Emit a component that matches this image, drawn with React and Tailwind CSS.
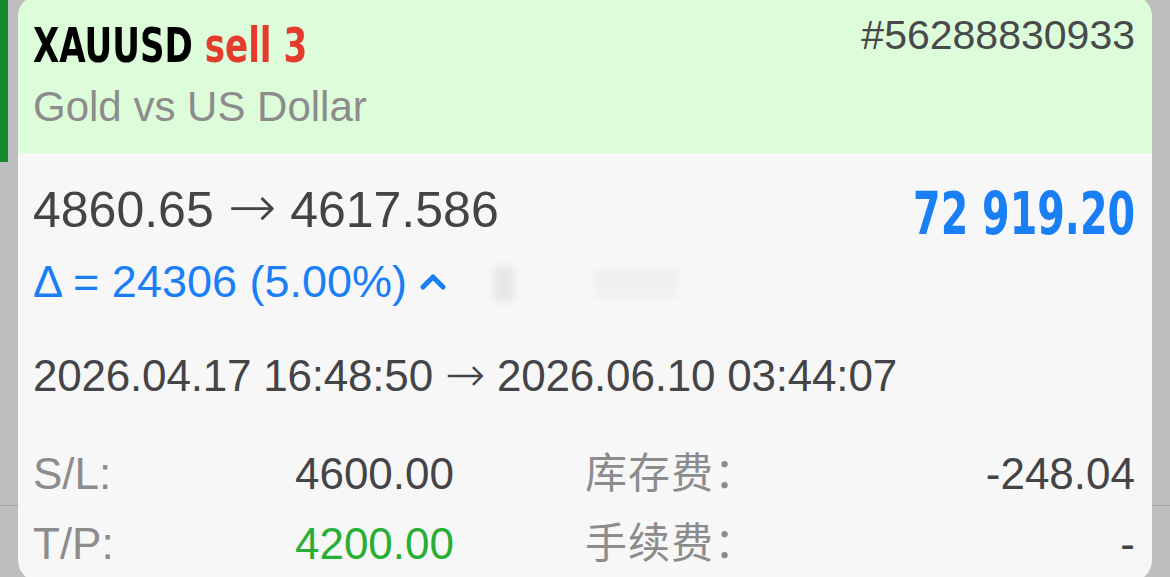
import React from 'react';

const sans = { fontFamily: '"Liberation Sans", Arial, "Noto Sans CJK SC", sans-serif' };
const narrow = { fontFamily: '"DejaVu Sans Condensed", "Liberation Sans", sans-serif' };
const arrowFont = { fontFamily: '"DejaVu Sans", sans-serif' };

const Arrow = ({ className = '' }) => (
    <span className={`font-extralight leading-[0] ${className}`} style={arrowFont}>→</span>
);

const ChevronUp = () => (
    <svg width="26" height="18" viewBox="0 0 26 18" className="ml-[13px] mt-[12px]">
        <polyline points="3,15 13,5 23,15" fill="none" stroke="#1a7ff5" strokeWidth="5" strokeLinecap="round" strokeLinejoin="round" />
    </svg>
);

const Row = ({ label, value, valueClass, cnLabel, cnValue, className }) => (
    <div className={`flex items-start text-[44px] leading-[44px] ${className}`}>
        <div className="w-[421px] flex justify-between">
            <span className="text-[#8c8c8c]">{label}</span>
            <span className={valueClass}>{value}</span>
        </div>
        <div className="ml-[131px] flex-1 flex justify-between">
            <span className="text-[#8c8c8c] text-[42px] tracking-[1px]">{cnLabel}</span>
            <span className="text-[#444447]">{cnValue}</span>
        </div>
    </div>
);

const App = () => {
    return (
        <div className="relative w-[1170px] h-[577px] overflow-hidden bg-[#bebebe]" style={sans}>
            {/* divider behind the card */}
            <div className="absolute left-0 right-0 top-[505px] h-px bg-[#a6a6a6]" />

            <div className="flex items-start">
                <div className="w-2 h-[162px] bg-[#15892b]" />
                <div className="w-[10px]" />

                <div className="relative w-[1134px] h-[587px] -mt-[5px] rounded-[22px] overflow-hidden bg-[#f7f7f7]">
                    {/* header */}
                    <div className="h-[158px] bg-[#ddfcd9] pl-[15px] pr-[17px]">
                        <div className="flex justify-between items-start">
                            <div
                                className="mt-[26px] inline-block origin-left scale-x-[0.79] whitespace-nowrap text-[48px] leading-[48px] font-bold"
                                style={narrow}
                            >
                                <span className="text-black">XAUUSD</span>{' '}
                                <span className="text-[#e53b2c]">sell 3</span>
                            </div>
                            <div className="mt-[20px] text-[41px] leading-[41px] text-[#48494b]">#56288830933</div>
                        </div>
                        <div className="mt-[17px] text-[42px] leading-[42px] text-[#8c8c8c]">Gold vs US Dollar</div>
                    </div>

                    {/* body */}
                    <div className="pl-[15px] pr-[17px]">
                        <div className="mt-[32px] flex justify-between items-start">
                            <div className="text-[50px] leading-[50px] text-[#444447] whitespace-nowrap">
                                4860.65 <Arrow className="text-[58px]" /> 4617.586
                            </div>
                            <div
                                className="-mt-[1px] inline-block origin-right scale-x-[0.76] whitespace-nowrap text-[58px] leading-[60px] font-bold text-[#1a7ff5]"
                                style={narrow}
                            >
                                72 919.20
                            </div>
                        </div>

                        <div className="mt-[16px] flex items-start text-[45px] leading-[44px] text-[#1a7ff5]">
                            <span>Δ = 24306 (5.00%)</span>
                            <ChevronUp />
                            <div className="ml-[48px] mt-[6px] flex items-center gap-[80px] blur-[3px] opacity-70">
                                <div className="w-[20px] h-[36px] bg-[#e2e2e2]" />
                                <div className="flex flex-col gap-[6px]">
                                    <div className="w-[85px] h-[4px] bg-[#e0e0e0]" />
                                    <div className="w-[85px] h-[4px] bg-[#e0e0e0]" />
                                    <div className="w-[85px] h-[4px] bg-[#e6e6e6]" />
                                </div>
                            </div>
                        </div>

                        <div className="mt-[50px] text-[44px] leading-[44px] tracking-[-0.2px] text-[#444447] whitespace-nowrap">
                            2026.04.17 16:48:50 <Arrow className="text-[48px]" /> 2026.06.10 03:44:07
                        </div>

                        <Row
                            className="mt-[54px]"
                            label="S/L:"
                            value="4600.00"
                            valueClass="text-[#444447]"
                            cnLabel="库存费："
                            cnValue="-248.04"
                        />
                        <Row
                            className="mt-[26px]"
                            label="T/P:"
                            value="4200.00"
                            valueClass="text-[#27ae35]"
                            cnLabel="手续费："
                            cnValue="-"
                        />
                    </div>
                </div>
            </div>
        </div>
    );
};

export default App;
